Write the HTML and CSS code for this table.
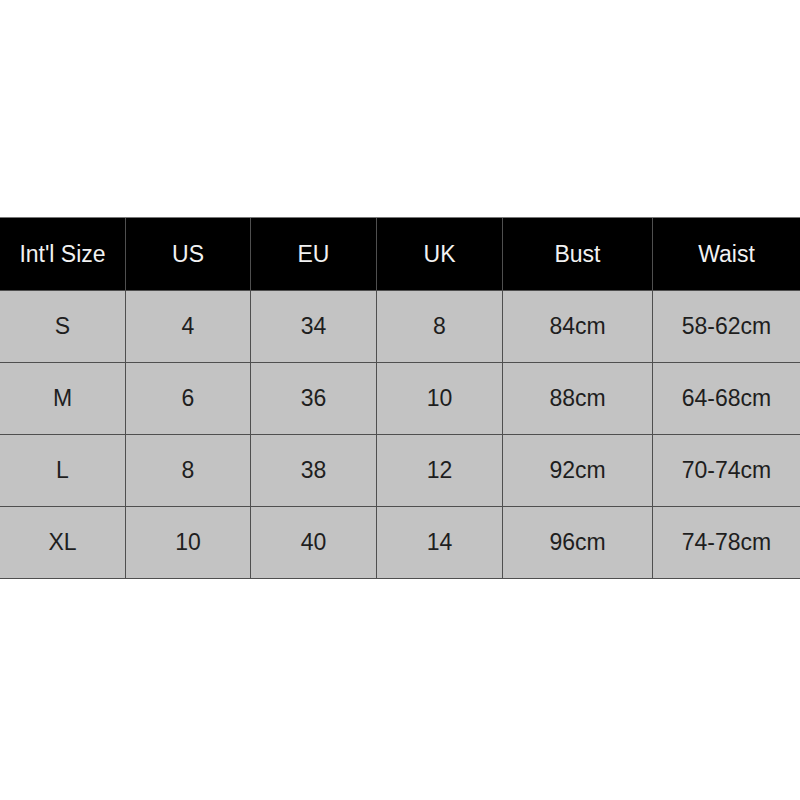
FILE: index.html
```html
<!DOCTYPE html>
<html>
<head>
<meta charset="utf-8">
<link rel="stylesheet" href="styles.css">
</head>
<body>
<div class="page">
  <div class="table">
    <div class="cell head">Int'l Size</div>
    <div class="cell head">US</div>
    <div class="cell head">EU</div>
    <div class="cell head">UK</div>
    <div class="cell head">Bust</div>
    <div class="cell head">Waist</div>

    <div class="cell">S</div>
    <div class="cell">4</div>
    <div class="cell">34</div>
    <div class="cell">8</div>
    <div class="cell">84cm</div>
    <div class="cell">58-62cm</div>

    <div class="cell">M</div>
    <div class="cell">6</div>
    <div class="cell">36</div>
    <div class="cell">10</div>
    <div class="cell">88cm</div>
    <div class="cell">64-68cm</div>

    <div class="cell">L</div>
    <div class="cell">8</div>
    <div class="cell">38</div>
    <div class="cell">12</div>
    <div class="cell">92cm</div>
    <div class="cell">70-74cm</div>

    <div class="cell">XL</div>
    <div class="cell">10</div>
    <div class="cell">40</div>
    <div class="cell">14</div>
    <div class="cell">96cm</div>
    <div class="cell">74-78cm</div>
  </div>
</div>
</body>
</html>
```

FILE: styles.css
```css
html, body {
  margin: 0;
  padding: 0;
  background: #ffffff;
}

.page {
  width: 800px;
  height: 800px;
  padding-top: 217px;
  box-sizing: border-box;
  font-family: "Liberation Sans", Arial, sans-serif;
}

.table {
  display: grid;
  grid-template-columns: 125px 124px 125px 125px 149px 147px;
  grid-template-rows: 72px 71px 71px 71px 71px;
  gap: 1px;
  background: #4f4f4f;
  border-top: 1px solid #777;
  border-bottom: 1px solid #4f4f4f;
}

.cell {
  background: #c3c3c3;
  color: #1e1e1e;
  font-size: 23px;
  display: flex;
  align-items: center;
  justify-content: center;
  padding-bottom: 1px;
}

.cell.head {
  background: #000000;
  color: #f2f2f2;
  padding-bottom: 0;
}
```
